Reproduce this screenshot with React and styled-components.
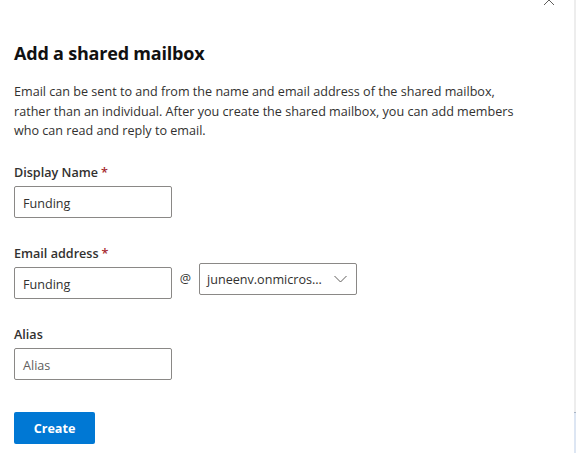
import React from "react";
import styled, { createGlobalStyle } from "styled-components";

const Global = createGlobalStyle`
  html, body { margin: 0; padding: 0; background: #fff; }
  body { font-family: "Open Sans", "Noto Sans", sans-serif; color: #323130; }
  * { box-sizing: border-box; }
`;

const Page = styled.div`
  display: flex;
  width: 576px;
  height: 453px;
  overflow: hidden;
  position: relative;
`;

const Panel = styled.div`
  flex: 1;
  display: flex;
  flex-direction: column;
  padding: 40px 0 0 14px;
`;

const Edge = styled.div`
  width: 2px;
  display: flex;
  flex-direction: column;
  background: #ededed;
`;

const EdgeLower = styled.div`
  margin-top: auto;
  height: 41px;
  background: #dde6f3;
  border-top: 1px solid #a9b4c4;
`;

const Close = styled.div`
  position: absolute;
  left: 542px;
  top: -10px;
  width: 14px;
  height: 14px;
  color: #605e5c;
`;

const Title = styled.h1`
  margin: 0;
  font-size: 18px;
  font-weight: 700;
  line-height: 26px;
  color: #111;
  letter-spacing: -0.2px;
`;

const Intro = styled.p`
  margin: 16px 0 0;
  width: 500px;
  font-size: 12.6px;
  line-height: 19.5px;
  color: #323130;
`;

const Field = styled.div`
  display: flex;
  flex-direction: column;
  margin-top: ${(p) => p.$mt}px;
`;

const Label = styled.label`
  font-size: 12.6px;
  font-weight: 600;
  line-height: 20px;
  color: #323130;
  margin-bottom: 3px;
`;

const Req = styled.span`
  color: #a4262c;
  margin-left: 3px;
`;

const Row = styled.div`
  display: flex;
  align-items: flex-start;
`;

const Input = styled.div`
  width: 158px;
  height: 32px;
  border: 1px solid #8a8886;
  border-radius: 2px;
  padding: 3px 8px 0;
  display: flex;
  align-items: center;
  font-size: 12.6px;
  color: ${(p) => (p.$placeholder ? "#605e5c" : "#323130")};
`;

const At = styled.span`
  width: 27px;
  text-align: center;
  font-size: 12.6px;
  line-height: 32px;
  margin-top: -4px;
  color: #323130;
`;

const Select = styled.div`
  width: 158px;
  height: 32px;
  margin-top: -4px;
  border: 1px solid #8a8886;
  border-radius: 2px;
  padding: 2px 9px 0 7px;
  display: flex;
  align-items: center;
  justify-content: space-between;
  font-size: 12.6px;
  color: #323130;
`;

const Chevron = styled.svg`
  width: 13px;
  height: 8px;
  margin-top: -2px;
  color: #605e5c;
`;

const Button = styled.button`
  margin-top: 32px;
  width: 81px;
  height: 32px;
  border: none;
  border-radius: 2px;
  background: #0078d4;
  color: #fff;
  font-family: inherit;
  font-size: 12.6px;
  font-weight: 700;
  padding: 1px 0 0;
  align-self: flex-start;
`;

export default function App() {
  return (
    <>
      <Global />
      <Page>
        <Close>
          <svg viewBox="0 0 14 14" width="14" height="14">
            <path d="M2 2 L12 12 M12 2 L2 12" stroke="currentColor" strokeWidth="1" fill="none" />
          </svg>
        </Close>
        <Panel>
          <Title>Add a shared mailbox</Title>
          <Intro>
            Email can be sent to and from the name and email address of the shared mailbox,
            rather than an individual. After you create the shared mailbox, you can add members
            who can read and reply to email.
          </Intro>
          <Field $mt={22}>
            <Label>
              Display Name<Req>*</Req>
            </Label>
            <Input>Funding</Input>
          </Field>
          <Field $mt={26}>
            <Label>
              Email address<Req>*</Req>
            </Label>
            <Row>
              <Input>Funding</Input>
              <At>@</At>
              <Select>
                <span>juneenv.onmicros...</span>
                <Chevron viewBox="0 0 13 8">
                  <path d="M0.5 1 L6.5 7 L12.5 1" stroke="currentColor" strokeWidth="1" fill="none" />
                </Chevron>
              </Select>
            </Row>
          </Field>
          <Field $mt={26}>
            <Label>Alias</Label>
            <Input $placeholder>Alias</Input>
          </Field>
          <Button>Create</Button>
        </Panel>
        <Edge>
          <EdgeLower />
        </Edge>
      </Page>
    </>
  );
}
